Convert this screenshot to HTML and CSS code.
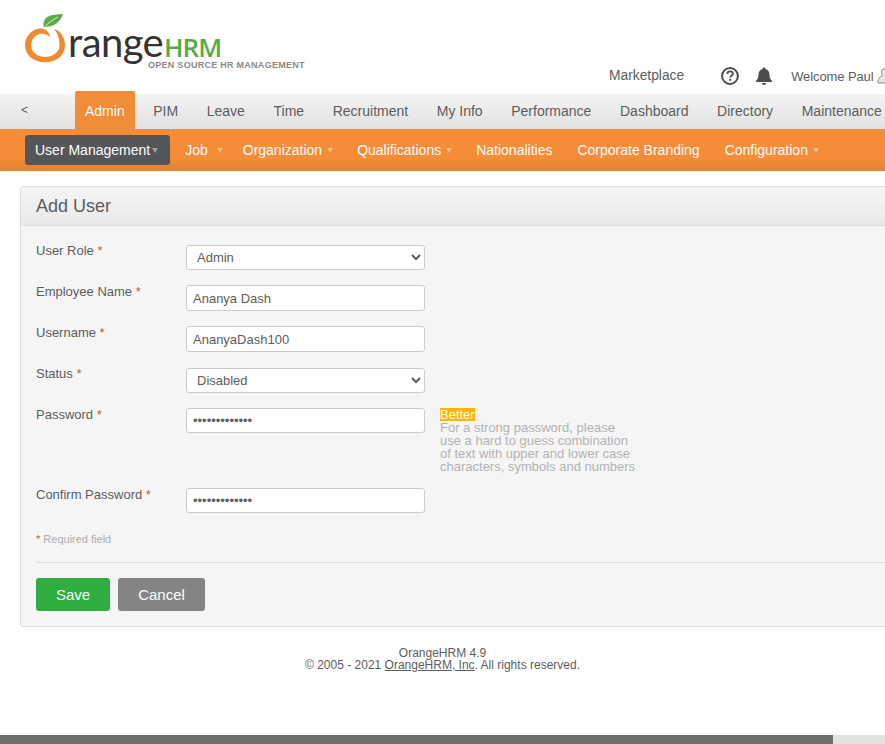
FILE: index.html
```html
<!doctype html>
<html>
<head>
    <title>OrangeHRM</title>
    <link rel="stylesheet" href="styles.css">
</head>
<body>
    <div class="pagina">
        <div class="cabecera">
            <div class="logo">
                <svg class="logoFruta" width="42" height="50" viewBox="0 0 42 50">
                    <path d="M38 0 C30 .5 22 1 19.5 6 C18 9 18 11 19 13 C28 13 35 9 38 0 Z" fill="#5aaa46"/>
                    <path d="M33 3 C28 6 23 9 20 12.5" fill="none" stroke="#fff" stroke-width=".8"/>
                    <path transform="translate(0 -1) scale(1.09 1)" d="M26.7 16 C33 18 36.7 25 36.7 32.3 C36.7 42 29 49.3 18.3 49.3 C8 49.3 0 42 0 32.3 C0 22 8 15 15 15.5 C19 16 22 19 23.5 24 C20 21 16 20 13 21 C8.5 22.5 5.7 27 5.7 32.3 C5.7 39 11 44 18.3 44 C26 44 31.7 39 31.7 32.3 C31.7 26 30 20 26.7 16 Z" fill="#f18a2f"/>
                </svg>
                <div class="logoTexto">
                    <div class="logoNombre">range<span class="logoHrm">HRM</span></div>
                    <div class="logoLema">OPEN SOURCE HR MANAGEMENT</div>
                </div>
            </div>
            <div class="cabeceraDerecha">
                <a class="marketplace">Marketplace</a>
                <svg class="iconoAyuda" width="18" height="18" viewBox="0 0 18 18">
                    <circle cx="9" cy="9" r="7.9" fill="none" stroke="#4d4d4d" stroke-width="2"/>
                    <path d="M6.3 7 C6.4 5.2 7.6 4.4 9.1 4.4 C10.8 4.4 11.9 5.4 11.9 6.8 C11.9 8.7 9.2 8.8 9.2 10.6" fill="none" stroke="#4d4d4d" stroke-width="1.8"/>
                    <rect x="8.2" y="11.8" width="2" height="2" fill="#4d4d4d"/>
                </svg>
                <svg class="iconoCampana" width="18" height="18" viewBox="0 0 18 18">
                    <path d="M9 0.5 C10 0.5 10.5 1.2 10.5 2 C13 2.7 14.5 4.8 14.5 7.5 C14.5 11 15.5 12.5 17 14 L17 15 L1 15 L1 14 C2.5 12.5 3.5 11 3.5 7.5 C3.5 4.8 5 2.7 7.5 2 C7.5 1.2 8 0.5 9 0.5 Z" fill="#4d4d4d"/>
                    <path d="M6.8 16 L11.2 16 C11 17.2 10.1 18 9 18 C7.9 18 7 17.2 6.8 16 Z" fill="#4d4d4d"/>
                </svg>
                <span class="bienvenida">Welcome Paul</span>
                <svg class="iconoUsuario" width="14" height="16" viewBox="0 0 14 16">
                    <path d="M7 1 C9 1 9.8 2.6 9.5 4.5 C9.3 6 9 7 8.6 7.8 C11 8.7 13 9.7 13 15 L1 15 C1 9.7 3 8.7 5.4 7.8 C5 7 4.7 6 4.5 4.5 C4.2 2.6 5 1 7 1 Z" fill="#e4e4e4" stroke="#8c8c8c" stroke-width="1"/>
                </svg>
            </div>
        </div>

        <div class="menu">
            <a class="menuVolver">&lt;</a>
            <ul class="menuLista">
                <li class="activo">Admin</li>
                <li>PIM</li>
                <li>Leave</li>
                <li>Time</li>
                <li>Recruitment</li>
                <li>My Info</li>
                <li>Performance</li>
                <li>Dashboard</li>
                <li>Directory</li>
                <li>Maintenance</li>
            </ul>
        </div>

        <ul class="submenu">
            <li class="seleccionado">User Management<i class="flecha flechaUsuario"></i></li>
            <li>Job<i class="flecha flechaJob"></i></li>
            <li>Organization<i class="flecha"></i></li>
            <li>Qualifications<i class="flecha"></i></li>
            <li>Nationalities</li>
            <li>Corporate Branding</li>
            <li>Configuration<i class="flecha"></i></li>
        </ul>

        <div class="caja">
            <div class="cajaTitulo">Add User</div>
            <form class="formulario" action="">
                <div class="fila filaSelect">
                    <label>User Role <em>*</em></label>
                    <select class="campo"><option>Admin</option></select>
                </div>
                <div class="fila">
                    <label>Employee Name <em>*</em></label>
                    <input class="campo" value="Ananya Dash">
                </div>
                <div class="fila">
                    <label>Username <em>*</em></label>
                    <input class="campo" value="AnanyaDash100">
                </div>
                <div class="fila filaSelect">
                    <label>Status <em>*</em></label>
                    <select class="campo"><option>Disabled</option></select>
                </div>
                <div class="fila filaPassword">
                    <label>Password <em>*</em></label>
                    <input class="campo campoClave" type="password" value="ananyadash100">
                    <div class="ayudaPassword">
                        <span class="fuerza">Better</span><br>
                        For a strong password, please<br>
                        use a hard to guess combination<br>
                        of text with upper and lower case<br>
                        characters, symbols and numbers
                    </div>
                </div>
                <div class="fila">
                    <label>Confirm Password <em>*</em></label>
                    <input class="campo campoClave" type="password" value="ananyadash100">
                </div>
                <p class="requerido"><em>*</em> Required field</p>
                <div class="botones">
                    <button type="button" class="btnGuardar">Save</button>
                    <button type="button" class="btnCancelar">Cancel</button>
                </div>
            </form>
        </div>

        <div class="pie">
            OrangeHRM 4.9<br>
            &copy; 2005 - 2021 <a>OrangeHRM, Inc</a>. All rights reserved.
        </div>
    </div>
    <div class="barra"><div class="barraPulgar"></div></div>
</body>
</html>
```

FILE: styles.css
```css
* {
    margin: 0;
    padding: 0;
    box-sizing: border-box;
}

html, body {
    height: 100%;
    overflow: hidden;
}

body {
    display: flex;
    flex-direction: column;
    font: 14px "Liberation Sans", Arial, sans-serif;
    color: #5d5d5d;
    background: #fff;
}

.pagina {
    flex: 1;
    width: 1000px;
    overflow: hidden;
}

/* Cabecera */
.cabecera {
    display: flex;
    height: 94px;
}

.logo {
    display: flex;
    align-items: flex-start;
    width: 580px;
    padding: 14px 0 0 25px;
}

.logoFruta {
    flex: none;
}

.logoTexto {
    margin-left: 1px;
    padding-top: 13px;
}

.logoNombre {
    height: 33px;
    font: 40px/30px Lato, "Open Sans", sans-serif;
    letter-spacing: -.6px;
    color: #333;
}

.logoHrm {
    margin-left: 1px;
    font: 600 26px/30px "Open Sans", sans-serif;
    color: #5aaa46;
    letter-spacing: -1px;
}

.logoLema {
    margin-left: 80px;
    font: bold 9px/11px "Liberation Sans", Arial, sans-serif;
    letter-spacing: .27px;
    color: #8a8a8a;
    white-space: nowrap;
}

.cabeceraDerecha {
    display: flex;
    align-items: center;
    height: 24px;
    margin-top: 64px;
    padding-left: 29px;
    white-space: nowrap;
}

.marketplace {
    margin-top: -2px;
    font-size: 13.8px;
}

.iconoAyuda {
    margin-left: 37px;
}

.iconoCampana {
    margin-left: 16px;
}

.bienvenida {
    margin-left: 18px;
    font-size: 13px;
    letter-spacing: -.1px;
}

.iconoUsuario {
    margin-left: 3px;
}

/* Menu principal */
.menu {
    display: flex;
    height: 35px;
    background: linear-gradient(#f4f4f4, #e1e1e1);
}

.menuVolver {
    width: 70.7px;
    padding: 9px 0 0 21px;
    font-size: 12px;
}

.menuLista {
    display: flex;
    list-style: none;
}

.menuLista li {
    height: 38px;
    margin: -3px 4.3px 0;
    padding: 12px 10px 0;
    white-space: nowrap;
}

.menuLista .activo {
    background: #f28c38;
    color: #fff;
    border-radius: 2px 2px 0 0;
}

/* Submenu */
.submenu {
    display: flex;
    align-items: center;
    height: 42px;
    padding-left: 25px;
    list-style: none;
    color: #fff;
    background: linear-gradient(#f48c38 70%, #e4812f);
}

.submenu li {
    display: flex;
    align-items: center;
    height: 30px;
    margin-right: 5px;
    padding: 0 10px;
    white-space: nowrap;
}

.submenu .seleccionado {
    background: #55565a;
    border-radius: 3px;
}

.flecha {
    width: 0;
    height: 0;
    margin: 0 -1px 0 5px;
    border: 3px solid transparent;
    border-top: 5px solid #f7bd8d;
    border-bottom: 0;
}

.flechaUsuario {
    margin: 0 2px;
    border-top-color: #a0a0a0;
}

.flechaJob {
    margin: 0 -5px 0 9px;
}

/* Caja del formulario */
.caja {
    margin: 15px 0 0 20px;
    background: #f5f5f5;
    border: 1px solid #dedede;
    border-radius: 3px;
}

.cajaTitulo {
    height: 39px;
    padding: 9px 15px 0;
    font-size: 18px;
    background: linear-gradient(#f5f5f5, #e9e9e9);
    border-bottom: 1px solid #dedede;
}

.formulario {
    padding: 15px;
}

.fila {
    display: flex;
    align-items: flex-start;
    height: 41px;
    padding-top: 3px;
    font-size: 13px;
}

.filaSelect .campo {
    height: 25px;
    margin-top: 1px;
}

.filaPassword {
    height: 80px;
}

.fila label {
    width: 150px;
    line-height: 15px;
    margin-top: -1px;
}

em {
    font-style: normal;
    color: #a8683f;
}

.campo {
    width: 239px;
    height: 26px;
    padding: 0 6px;
    font: 13px "Liberation Sans", Arial, sans-serif;
    color: #5d5d5d;
    background: #fff;
    border: 1px solid #ccc;
    border-radius: 3px;
}

.campoClave {
    height: 25px;
}

.ayudaPassword {
    margin-left: 15px;
    line-height: 13px;
    color: #b3b3b3;
    white-space: nowrap;
}

.fuerza {
    display: inline-block;
    color: #fff;
    background: #fdb500;
}

.requerido {
    margin-top: 6px;
    font-size: 11px;
    line-height: 14px;
    color: #adadad;
}

.botones {
    display: flex;
    gap: 8px;
    margin-top: 16px;
    padding-top: 15px;
    border-top: 1px solid #dedede;
}

.botones button {
    height: 33px;
    font: 15px "Liberation Sans", Arial, sans-serif;
    color: #fff;
    border: 0;
    border-radius: 3px;
}

.btnGuardar {
    width: 74px;
    background: #2fae40;
}

.btnCancelar {
    width: 87px;
    background: #848484;
}

/* Pie */
.pie {
    width: 885px;
    margin-top: 20px;
    font-size: 12px;
    line-height: 12px;
    text-align: center;
}

.pie a {
    text-decoration: underline;
}

/* Barra de desplazamiento */
.barra {
    flex: none;
    height: 9px;
    background: #e2e2e2;
}

.barraPulgar {
    width: 833px;
    height: 100%;
    background: #6e6e6e;
}
```
